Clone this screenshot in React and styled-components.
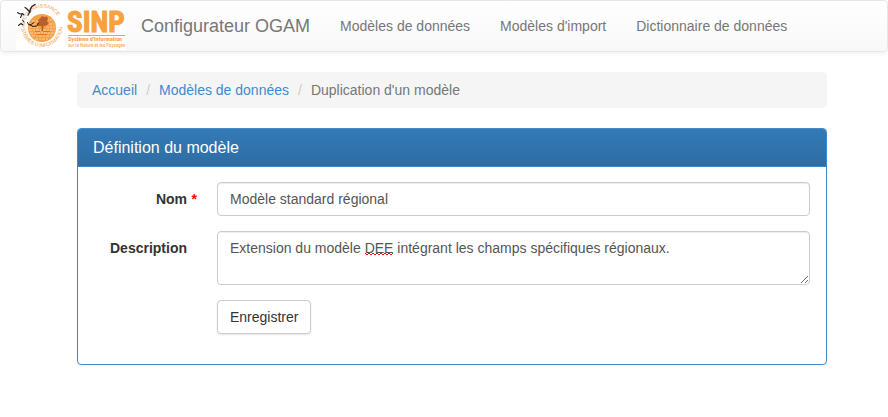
import React from "react";
import styled, { createGlobalStyle } from "styled-components";

const GlobalStyle = createGlobalStyle`
  *, *::before, *::after { box-sizing: border-box; }
  body {
    margin: 0;
    background: #fff;
    color: #333;
    font-family: "Liberation Sans", Arial, sans-serif;
    font-size: 14px;
    line-height: 20px;
  }
`;

const Navbar = styled.nav`
  display: flex;
  align-items: center;
  gap: 15px;
  min-height: 52px;
  padding: 0 15px;
  border: 1px solid #e7e7e7;
  border-radius: 4px;
  background: linear-gradient(to bottom, #fff, #f8f8f8);
  box-shadow: 0 1px 5px rgba(0, 0, 0, 0.08);
`;

const LogoLink = styled.a`
  display: block;
  flex: none;
  height: 48px;
`;

const Brand = styled.a`
  color: #777;
  font-size: 18px;
  text-decoration: none;
  white-space: nowrap;
`;

const NavList = styled.ul`
  display: flex;
  margin: 0;
  padding: 0;
  list-style: none;
`;

const NavLink = styled.a`
  display: block;
  padding: 15px;
  color: #777;
  text-decoration: none;
  white-space: nowrap;
`;

const Main = styled.main`
  padding: 20px 61px 20px 77px;
`;

const Breadcrumb = styled.ol`
  display: flex;
  flex-wrap: wrap;
  margin: 0 0 20px;
  padding: 8px 15px;
  border-radius: 4px;
  background: #f5f5f5;
  list-style: none;
`;

const Crumb = styled.li`
  color: #777;

  & + &::before {
    content: "/";
    padding: 0 9px;
    color: #ccc;
  }
`;

const CrumbLink = styled.a`
  color: #428bca;
  text-decoration: none;
`;

const Panel = styled.section`
  overflow: hidden;
  border: 1px solid #428bca;
  border-radius: 4px;
  box-shadow: 0 1px 2px rgba(0, 0, 0, 0.05);
`;

const PanelTitle = styled.h3`
  margin: 0;
  padding: 9px 15px 8px;
  border-bottom: 1px solid #428bca;
  background: linear-gradient(to bottom, #337ab7, #2e6da4);
  color: #fff;
  font-size: 16px;
  font-weight: 400;
  line-height: 20px;
`;

const Form = styled.form`
  display: grid;
  gap: 15px;
  padding: 15px 16px 30px 15px;
`;

const Row = styled.div`
  display: grid;
  grid-template-columns: 104px 1fr;
  column-gap: 20px;
  align-items: start;
`;

const Label = styled.label`
  display: grid;
  grid-template-columns: 1fr 6px;
  column-gap: 4px;
  padding-top: 7px;
  font-weight: 700;
  text-align: right;
`;

const Required = styled.span`
  color: #f00;
`;

const Control = styled.input`
  display: block;
  width: 100%;
  height: ${(p) => (p.$tall ? "54px" : "34px")};
  margin: 0;
  padding: 6px 12px;
  border: 1px solid #ccc;
  border-radius: 4px;
  outline: none;
  background: #fff;
  box-shadow: inset 0 1px 1px rgba(0, 0, 0, 0.075);
  color: #555;
  font: inherit;
  resize: vertical;
`;

const ControlWrap = styled.div`
  position: relative;
`;

const Squiggle = styled.svg`
  position: absolute;
  top: 21px;
  left: 148px;
  pointer-events: none;
`;

const SubmitButton = styled.button`
  grid-column: 2;
  justify-self: start;
  height: 34px;
  padding: 6px 12px;
  border: 1px solid #ccc;
  border-radius: 4px;
  background: #fff;
  box-shadow: 0 1px 2px rgba(0, 0, 0, 0.1);
  color: #333;
  font: inherit;
  cursor: pointer;
`;

const LogoText = styled.text`
  fill: #f9a03f;
  font-family: "Roboto Condensed", Roboto, "Liberation Sans", sans-serif;
  font-size: ${(p) => p.$size}px;
  font-weight: ${(p) => p.$weight || 700};
`;

const LogoTitle = styled(LogoText)`
  stroke: #f9a03f;
  stroke-width: 1px;
`;

const RingText = styled.text`
  fill: #f39a45;
  font-family: "Liberation Sans", Arial, sans-serif;
  font-size: 5px;
`;

function SinpLogo() {
  return (
    <svg width="110" height="48" viewBox="16 2 110 48" role="img" aria-label="SINP">
      <defs>
        <path id="ring-top" d="M26 20 A17 17 0 0 1 59 29" />
        <path id="ring-bottom" d="M22 22 A20.5 20.5 0 1 0 62 22" />
      </defs>
      <rect x="16" y="2" width="110" height="48" fill="#fff" />
      <circle cx="42" cy="28" r="14" fill="#f7a048" />
      <path
        d="M32 21H38M46 20H52M29.5 24H36M49 24H54M29 27H38M46 27H55M29 30H55M30 33H54M32 36H52M35 39H49"
        fill="none"
        stroke="#fcdcb4"
        strokeWidth="0.8"
        strokeDasharray="3 1 2 1"
      />
      <path
        d="M41.5 31L41.5 26L38.5 26L37 24L39 22L38 20L40 18.5L42 16L44.5 17L47 16.5L48 19L47 21.5L49 23L46.5 25.5L43.5 26L43 31Z"
        fill="#b9602c"
      />
      <path d="M35 31.5H40M43 31.5H50M37 34.5H47" fill="none" stroke="#da7626" />
      <RingText>
        <textPath href="#ring-top">CONNAISSANCE</textPath>
      </RingText>
      <RingText>
        <textPath href="#ring-bottom">SYSTÈMES D'INFORMATION</textPath>
      </RingText>
      <g fill="none" stroke="#222" strokeLinecap="round">
        <path d="M35 4.5L32 6.5L30.5 9L29.5 12.5" strokeWidth="1.4" />
        <path d="M30 12L26.5 8.5L25 7.5M29.5 12.5L28 15" strokeWidth="1.2" />
        <path d="M17.5 12.5L20 14L22.5 13.5L24 15M22 14.5L20.5 17.5" strokeWidth="1.1" />
        <path d="M18.5 25.5L21 23.5L23 25M22.5 20L24 22" strokeWidth="1.1" />
        <path d="M27.5 22.5L29 25L32 24L34 22.5M30 25L33 26.5L37 26L38.5 23" strokeWidth="1" />
      </g>
      <LogoTitle $size={29} x="67" y="32">SINP</LogoTitle>
      <path d="M68 35.5H125" stroke="#f9a03f" strokeWidth="1" />
      <LogoText $size={6} x="68" y="41">Système d'Information</LogoText>
      <LogoText $size={5} $weight={400} x="68" y="47">sur la Nature et les Paysages</LogoText>
    </svg>
  );
}

const navItems = ["Modèles de données", "Modèles d'import", "Dictionnaire de données"];

export default function App() {
  return (
    <>
      <GlobalStyle />
      <Navbar>
        <LogoLink href="#">
          <SinpLogo />
        </LogoLink>
        <Brand href="#">Configurateur OGAM</Brand>
        <NavList>
          {navItems.map((item) => (
            <li key={item}>
              <NavLink href="#">{item}</NavLink>
            </li>
          ))}
        </NavList>
      </Navbar>
      <Main>
        <Breadcrumb>
          <Crumb><CrumbLink href="#">Accueil</CrumbLink></Crumb>
          <Crumb><CrumbLink href="#">Modèles de données</CrumbLink></Crumb>
          <Crumb aria-current="page">Duplication d'un modèle</Crumb>
        </Breadcrumb>
        <Panel>
          <PanelTitle>Définition du modèle</PanelTitle>
          <Form onSubmit={(e) => e.preventDefault()}>
            <Row>
              <Label htmlFor="name">
                <span>Nom</span>
                <Required>*</Required>
              </Label>
              <Control id="name" type="text" required defaultValue="Modèle standard régional" />
            </Row>
            <Row>
              <Label htmlFor="description">
                <span>Description</span>
              </Label>
              <ControlWrap>
                <Control
                  as="textarea"
                  id="description"
                  $tall
                  defaultValue="Extension du modèle DEE intégrant les champs spécifiques régionaux."
                />
                <Squiggle width="29" height="4" viewBox="0 0 29 4" aria-hidden="true">
                  <path
                    d="M0 1L2 3L4 1L6 3L8 1L10 3L12 1L14 3L16 1L18 3L20 1L22 3L24 1L26 3L28 1"
                    fill="none"
                    stroke="#f00"
                  />
                </Squiggle>
              </ControlWrap>
            </Row>
            <Row>
              <SubmitButton type="submit">Enregistrer</SubmitButton>
            </Row>
          </Form>
        </Panel>
      </Main>
    </>
  );
}
